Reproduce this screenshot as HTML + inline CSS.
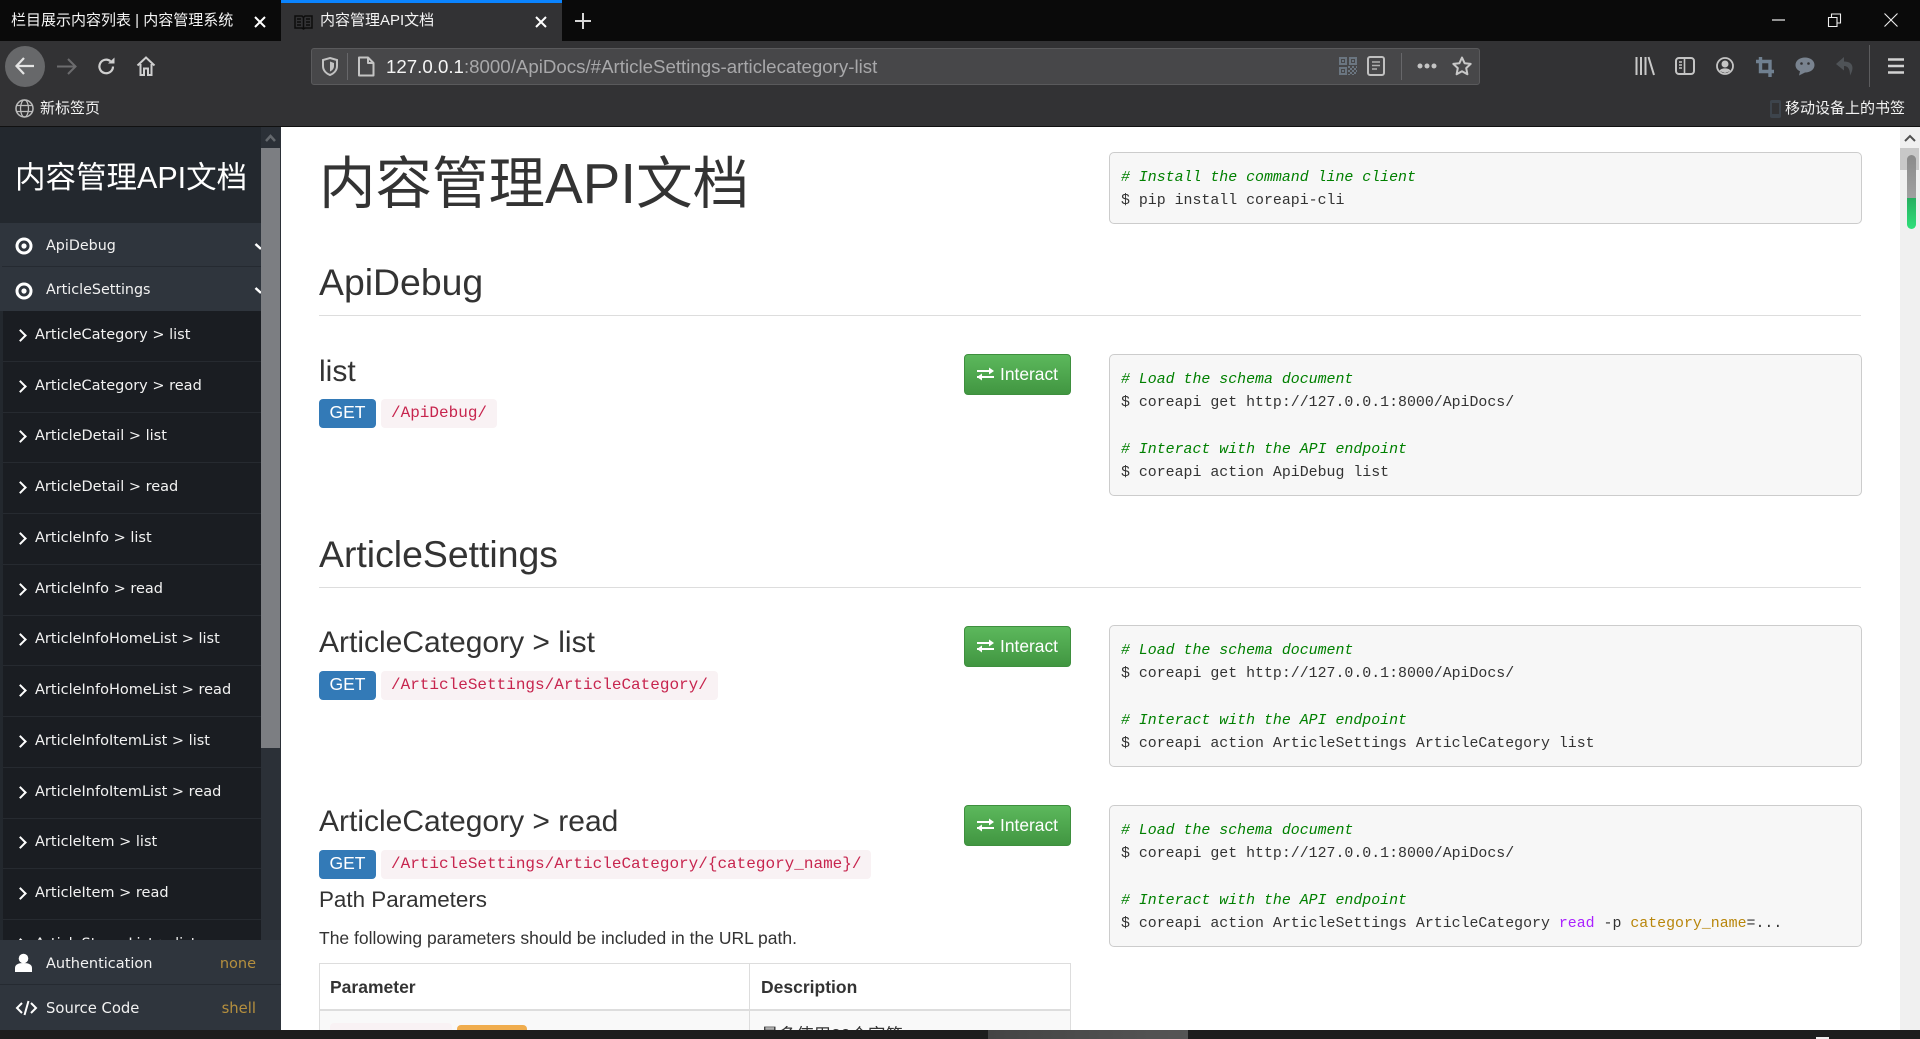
<!DOCTYPE html>
<html><head><meta charset="utf-8"><title>内容管理API文档</title>
<style>
*{box-sizing:border-box}
html,body{margin:0;padding:0;width:1920px;height:1039px;overflow:hidden;background:#323234;font-family:"Liberation Sans","Noto Sans CJK SC",sans-serif}
.a{position:absolute}
.t{position:absolute;white-space:nowrap}
svg{position:absolute;overflow:visible}
.ui{font-size:15px;color:#f4f4f4;line-height:20px}
#side{left:0;top:127px;width:281px;height:903px;background:#23282e;overflow:hidden;font-family:"DejaVu Sans","Noto Sans CJK SC",sans-serif;color:#f2f2f2}
.m{left:0;width:261px;background:#2f353d;height:44px;font-size:14.300px;padding-left:46px}
.sub{left:3px;top:184px;width:258px;height:629px;overflow:hidden;background:#1a1d22}
.s{position:absolute;left:0;width:258px;height:51px;border-bottom:1px solid #262a30;font-size:14.500px;line-height:48px;padding-left:32px;white-space:nowrap;color:#f2f2f2}
.s:before{content:"";position:absolute;left:13px;top:20px;width:7px;height:7px;border-top:2.500px solid #fff;border-right:2.500px solid #fff;transform:rotate(45deg)}
#main{left:281px;top:127px;width:1639px;height:903px;background:#fff;overflow:hidden;color:#333}
.h{position:absolute;left:38px;white-space:nowrap;color:#333;line-height:1}
.hr{position:absolute;left:38px;width:1542px;height:1px;background:#ddd}
.btn{position:absolute;left:683px;width:107px;height:41px;border:1px solid #3e8f3e;border-radius:4px;background:linear-gradient(#5cb85c,#419641);color:#fff;font-size:17.400px;line-height:38px;padding-left:35px}
.get{position:absolute;left:38px;width:57px;height:29px;border-radius:4px;background:#337ab7;color:#fff;font-size:17.500px;line-height:27px;text-align:center}
.code{position:absolute;left:100px;height:29px;border-radius:4px;background:#f9f2f4;color:#c7254e;font-family:"Liberation Mono",monospace;font-size:16px;line-height:29px;padding:0 10px;white-space:nowrap}
.pre{position:absolute;left:828px;width:753px;background:#f7f7f7;border:1px solid #ccc;border-radius:5px}
.l{position:absolute;left:11px;margin-top:1px;font-family:"Liberation Mono",monospace;font-size:14.900px;line-height:20px;white-space:pre;color:#333}
.c{color:#008000;font-style:italic}
</style></head><body>

<!-- tab strip -->
<div class="a" style="left:0;top:0;width:1920px;height:41px;background:#0a0a0a"></div>
<div class="t ui" style="left:11px;top:11px">栏目展示内容列表 | 内容管理系统</div>
<svg style="left:253px;top:15px" width="14" height="14"><path d="M2 2L12 12M12 2L2 12" stroke="#fff" stroke-width="2"/></svg>
<div class="a" style="left:281px;top:0;width:281px;height:41px;background:#323234"></div>
<div class="a" style="left:281px;top:0;width:281px;height:3px;background:#0a84ff"></div>
<svg style="left:294px;top:14px" width="19" height="16"><path d="M1 2h7l1.500 1.500L11 2h7v12h-7l-1.500 1-1.500-1H1zM9.500 3.500V14" fill="none" stroke="#0c0c0c" stroke-width="1.500"/><path d="M3 5h4M3 8h4M3 11h4M12 5h4M12 8h4M12 11h4" stroke="#0c0c0c" stroke-width="1.500"/></svg>
<div class="t ui" style="left:320px;top:11px">内容管理API文档</div>
<svg style="left:534px;top:15px" width="14" height="14"><path d="M2 2L12 12M12 2L2 12" stroke="#fff" stroke-width="2"/></svg>
<svg style="left:574px;top:12px" width="18" height="18"><path d="M9 1V17M1 9H17" stroke="#d6d6d6" stroke-width="2"/></svg>
<svg style="left:1772px;top:14px" width="14" height="12"><path d="M0 6H13" stroke="#eee" stroke-width="1.200"/></svg>
<svg style="left:1828px;top:13px" width="14" height="14"><path d="M.5 4.500h8.500v9H.500zM3.500 4.500v-3.500h9v9H9" fill="none" stroke="#eee" stroke-width="1.100"/></svg>
<svg style="left:1884px;top:13px" width="14" height="14"><path d="M.5 .5L13.500 13.500M13.500 .5L.5 13.500" stroke="#eee" stroke-width="1.100"/></svg>

<!-- nav bar -->
<div class="a" style="left:5px;top:46px;width:40px;height:41px;border-radius:50%;background:#67686a"></div>
<svg style="left:14px;top:56px" width="22" height="20"><path d="M20 10H3M10 2L2.500 10L10 18" fill="none" stroke="#e4e4e4" stroke-width="2.200"/></svg>
<svg style="left:56px;top:57px" width="22" height="19"><path d="M1 9.500H19M12 2L19.500 9.500L12 17" fill="none" stroke="#6c6c6e" stroke-width="2"/></svg>
<svg style="left:97px;top:57px" width="19" height="19"><path d="M16 9.500A6.800 6.800 0 1 1 13.500 4.200" fill="none" stroke="#cfcfcf" stroke-width="2.200"/><path d="M11 6.500H17.500V.5z" fill="#cfcfcf"/></svg>
<svg style="left:136px;top:55px" width="20" height="22"><path d="M1.500 10.500L10 2.500L18.500 10.500M4.500 9V20H8V13.500H12V20H15.500V9" fill="none" stroke="#cfcfcf" stroke-width="2"/></svg>

<div class="a" style="left:311px;top:48px;width:1169px;height:37px;background:#474749;border:1px solid #5a5a5c;border-radius:3px"></div>
<svg style="left:322px;top:57px" width="16" height="19"><path d="M8 1L15 3V9C15 14 11 17 8 18C5 17 1 14 1 9V3z" fill="none" stroke="#c2c2c2" stroke-width="2"/><path d="M8 4.500L12 6V9C12 12 10 13.500 8 14.500z" fill="#c2c2c2"/></svg>
<div class="a" style="left:347px;top:53px;width:1px;height:27px;background:#67676a"></div>
<svg style="left:357px;top:56px" width="18" height="21"><path d="M2 1.500H11L16.500 7V19.500H2zM11 1.500V7H16.500" fill="none" stroke="#c4c4c4" stroke-width="2" stroke-linejoin="round"/></svg>
<div class="t" style="left:386px;top:55px;font-size:18.700px;line-height:23px;color:#a8a8aa"><span style="color:#f5f5f5">127.0.0.1</span>:8000/ApiDocs/#ArticleSettings-articlecategory-list</div>
<svg style="left:1339px;top:57px" width="18" height="18"><path d="M0 0h8v8H0zM10 0h8v8h-8zM0 10h8v8H0z" fill="#6b7681"/><path d="M2 2h4v4H2zM12 2h4v4h-4zM2 12h4v4H2z" fill="#474749"/><path d="M3 3h2v2H3zM13 3h2v2h-2zM3 13h2v2H3z" fill="#6b7681"/><path d="M9 9h2v2H9zM13 9h2v2h-2zM17 9h1v2h-1zM11 11h2v2h-2zM15 11h2v2h-2zM9 13h2v2H9zM13 13h2v2h-2zM17 13h1v2h-1zM11 15h2v2h-2zM15 15h2v2h-2zM9 17h2v1H9zM13 17h2v1h-2z" fill="#6b7681"/></svg>
<svg style="left:1367px;top:56px" width="18" height="20"><rect x="1" y="1" width="16" height="18" rx="2" fill="none" stroke="#c0c0c0" stroke-width="2"/><path d="M5 6H13M5 9.500H13M5 13H10" stroke="#b0b0b0" stroke-width="1.500"/></svg>
<div class="a" style="left:1401px;top:53px;width:1px;height:27px;background:#67676a"></div>
<svg style="left:1417px;top:62px" width="20" height="8"><circle cx="3" cy="4" r="2.500" fill="#c4c4c4"/><circle cx="10" cy="4" r="2.500" fill="#c4c4c4"/><circle cx="17" cy="4" r="2.500" fill="#c4c4c4"/></svg>
<svg style="left:1452px;top:56px" width="20" height="20"><path d="M10 1.500L12.600 7.200L18.700 7.900L14.200 12.100L15.400 18.300L10 15.200L4.600 18.300L5.800 12.100L1.300 7.900L7.400 7.200z" fill="none" stroke="#c8c8c8" stroke-width="2" stroke-linejoin="round"/></svg>

<svg style="left:1635px;top:57px" width="20" height="18"><path d="M1.500 0V18M6 0V18M10.500 0V18M13.500 0L19 18" stroke="#c8c8c8" stroke-width="2" fill="none"/></svg>
<svg style="left:1675px;top:57px" width="20" height="18"><rect x="1" y="1" width="18" height="16" rx="3" fill="none" stroke="#c4c4c4" stroke-width="2"/><path d="M9.500 1V17M4 5H7M4 8H7M4 11H7" stroke="#c4c4c4" stroke-width="1.600"/></svg>
<svg style="left:1716px;top:57px" width="18" height="18"><circle cx="9" cy="9" r="8" fill="none" stroke="#c4c4c4" stroke-width="1.800"/><circle cx="9" cy="7" r="3.500" fill="#c4c4c4"/><path d="M3.500 14C4.500 10.500 13.500 10.500 14.500 14L9 16z" fill="#c4c4c4"/></svg>
<svg style="left:1756px;top:57px" width="18" height="20"><path d="M4.500 0V14.500H18M0 4.500H14V20" fill="none" stroke="#708090" stroke-width="3.400"/></svg>
<svg style="left:1795px;top:57px" width="20" height="19"><path d="M10 0.500C15.500 .5 19.500 3.700 19.500 8C19.500 12.300 15.500 15.500 10 15.500L4 18.500L5 14.300C2.200 13 .5 10.800 .5 8C.5 3.700 4.500 .5 10 .5z" fill="#79838f"/><circle cx="6.500" cy="6.500" r="1.300" fill="#323234"/><circle cx="13.500" cy="6.500" r="1.300" fill="#323234"/></svg>
<svg style="left:1836px;top:57px" width="18" height="19"><path d="M8 0L0 7L8 13.500V9C12 9 14 12 14 18.500C18 12 18 4.500 8 4.500z" fill="#4f5357"/></svg>
<div class="a" style="left:1869px;top:45px;width:1px;height:42px;background:#5c5c5e"></div>
<svg style="left:1888px;top:58px" width="16" height="16"><path d="M0 1.500H16M0 8H16M0 14.500H16" stroke="#d2d2d2" stroke-width="2.400"/></svg>

<!-- bookmark bar -->
<svg style="left:15px;top:99px" width="19" height="19"><circle cx="9.500" cy="9.500" r="8.500" fill="none" stroke="#bdbdbd" stroke-width="1.500"/><ellipse cx="9.500" cy="9.500" rx="4" ry="8.500" fill="none" stroke="#bdbdbd" stroke-width="1.300"/><path d="M1.500 6.500H17.500M1.500 12.500H17.500" stroke="#bdbdbd" stroke-width="1.300"/></svg>
<div class="t ui" style="left:40px;top:99px">新标签页</div>
<svg style="left:1770px;top:100px" width="11" height="18"><rect x="0" y="0" width="11" height="18" rx="2" fill="#3d444c"/><rect x="2" y="3" width="7" height="11" fill="#323234"/></svg>
<div class="t ui" style="left:1785px;top:99px">移动设备上的书签</div>
<div class="a" style="left:0;top:126px;width:1920px;height:1px;background:#111"></div>

<!-- sidebar -->
<div class="a" id="side">
  <div class="t" style="left:15px;top:33px;font-size:30.500px;line-height:36px;font-family:'Liberation Sans','Noto Sans CJK SC',sans-serif;color:#fff">内容管理API文档</div>
  <div class="a m" style="top:96px;line-height:46px">ApiDebug</div>
  <div class="a" style="left:2px;top:139px;width:259px;height:1px;background:#252a31"></div>
  <div class="a m" style="top:140px;line-height:47px">ArticleSettings</div>
  <svg style="left:15px;top:110px" width="18" height="18"><circle cx="9" cy="9" r="7" fill="none" stroke="#fff" stroke-width="3"/><circle cx="9" cy="9" r="2.600" fill="#fff"/></svg>
  <svg style="left:15px;top:155px" width="18" height="18"><circle cx="9" cy="9" r="7" fill="none" stroke="#fff" stroke-width="3"/><circle cx="9" cy="9" r="2.600" fill="#fff"/></svg>
  <svg style="left:255px;top:116px" width="6" height="8"><path d="M.5 1L6 6" stroke="#fff" stroke-width="2.500"/></svg>
  <svg style="left:255px;top:160px" width="6" height="8"><path d="M.5 1L6 6" stroke="#fff" stroke-width="2.500"/></svg>
  <div class="a sub">
    <div class="s" style="top:0">ArticleCategory &gt; list</div>
    <div class="s" style="top:51px">ArticleCategory &gt; read</div>
    <div class="s" style="top:101px">ArticleDetail &gt; list</div>
    <div class="s" style="top:152px">ArticleDetail &gt; read</div>
    <div class="s" style="top:203px">ArticleInfo &gt; list</div>
    <div class="s" style="top:254px">ArticleInfo &gt; read</div>
    <div class="s" style="top:304px">ArticleInfoHomeList &gt; list</div>
    <div class="s" style="top:355px">ArticleInfoHomeList &gt; read</div>
    <div class="s" style="top:406px">ArticleInfoItemList &gt; list</div>
    <div class="s" style="top:457px">ArticleInfoItemList &gt; read</div>
    <div class="s" style="top:507px">ArticleItem &gt; list</div>
    <div class="s" style="top:558px">ArticleItem &gt; read</div>
    <div class="s" style="top:609px">ArticleStoreyList &gt; list</div>
  </div>
  <!-- scrollbar -->
  <div class="a" style="left:261px;top:0;width:20px;height:813px;background:#2b3037"></div>
  <svg style="left:265px;top:7px" width="11" height="8"><path d="M1 7L5.500 2L10 7" fill="none" stroke="#64686d" stroke-width="2.500"/></svg>
  <div class="a" style="left:261px;top:21px;width:19px;height:600px;background:#7c7e82"></div>
  <div class="a" style="left:0;top:813px;width:281px;height:90px;background:#2f353d"></div>
  <div class="a" style="left:0;top:857px;width:281px;height:1px;background:#252a31"></div>
  <svg style="left:15px;top:826px" width="17" height="20"><circle cx="8.500" cy="5.500" r="4.800" fill="#fff"/><path d="M0 19V15C0 11.500 3.500 10 8.500 10S17 11.500 17 15V19z" fill="#fff"/></svg>
  <div class="t" style="left:46px;top:815px;font-size:14.500px;line-height:44px">Authentication</div>
  <div class="t" style="right:25px;top:815px;font-size:14.500px;line-height:44px;color:#b58f3e">none</div>
  <svg style="left:16px;top:873px" width="21" height="16"><path d="M6 3L1 8L6 13M15 3L20 8L15 13M12.500 1L8.500 15" fill="none" stroke="#fff" stroke-width="2"/></svg>
  <div class="t" style="left:46px;top:860px;font-size:14.800px;line-height:44px">Source Code</div>
  <div class="t" style="right:25px;top:860px;font-size:14.800px;line-height:44px;color:#b58f3e">shell</div>
</div>

<!-- main -->
<div class="a" id="main">
  <div class="h" style="top:23px;font-size:56.500px;line-height:68px">内容管理API文档</div>
  <div class="h" style="top:134px;font-size:37.400px;line-height:42px">ApiDebug</div>
  <div class="hr" style="top:188px"></div>
  <div class="h" style="top:228px;font-size:30px;line-height:34px">list</div>
  <div class="btn" style="top:227px">Interact<svg style="left:12px;top:12px" width="18" height="14"><path d="M0 4H13M0 10H17" stroke="#fff" stroke-width="2"/><path d="M12 .5L17 4L12 7.500zM5 6.500L0 10L5 13.500z" fill="#fff"/></svg></div>
  <div class="get" style="top:272px">GET</div><div class="code" style="top:272px">/ApiDebug/</div>

  <div class="h" style="top:406px;font-size:37.400px;line-height:42px">ArticleSettings</div>
  <div class="hr" style="top:460px"></div>
  <div class="h" style="top:499px;font-size:30px;line-height:34px">ArticleCategory &gt; list</div>
  <div class="btn" style="top:499px">Interact<svg style="left:12px;top:12px" width="18" height="14"><path d="M0 4H13M0 10H17" stroke="#fff" stroke-width="2"/><path d="M12 .5L17 4L12 7.500zM5 6.500L0 10L5 13.500z" fill="#fff"/></svg></div>
  <div class="get" style="top:544px">GET</div><div class="code" style="top:544px">/ArticleSettings/ArticleCategory/</div>

  <div class="h" style="top:678px;font-size:30px;line-height:34px">ArticleCategory &gt; read</div>
  <div class="btn" style="top:678px">Interact<svg style="left:12px;top:12px" width="18" height="14"><path d="M0 4H13M0 10H17" stroke="#fff" stroke-width="2"/><path d="M12 .5L17 4L12 7.500zM5 6.500L0 10L5 13.500z" fill="#fff"/></svg></div>
  <div class="get" style="top:723px">GET</div><div class="code" style="top:723px">/ArticleSettings/ArticleCategory/{category_name}/</div>
  <div class="h" style="top:760px;font-size:22.400px;line-height:26px">Path Parameters</div>
  <div class="h" style="top:801px;font-size:17.500px;line-height:20px">The following parameters should be included in the URL path.</div>

  <div class="a" style="left:38px;top:836px;width:752px;height:80px;border:1px solid #ddd;background:#fff"></div>
  <div class="a" style="left:39px;top:883px;width:750px;height:30px;background:#f9f9f9"></div>
  <div class="a" style="left:38px;top:882px;width:752px;height:2px;background:#ddd"></div>
  <div class="a" style="left:468px;top:836px;width:1px;height:80px;background:#ddd"></div>
  <div class="t" style="left:49px;top:850px;font-size:17.500px;line-height:20px;font-weight:bold">Parameter</div>
  <div class="t" style="left:480px;top:850px;font-size:17.500px;line-height:20px;font-weight:bold">Description</div>
  <div class="a" style="left:49px;top:896px;width:122px;height:20px;background:#f9f2f4;border-radius:4px"></div>
  <div class="a" style="left:176px;top:898px;width:70px;height:20px;background:#f0ad4e;border-radius:4px"></div>
  <div class="t" style="left:480px;top:896px;font-size:17.500px;line-height:24px">最多使用20个字符</div>

  <!-- code blocks -->
  <div class="pre" style="top:25px;height:72px">
    <div class="l" style="top:14px"><span class="c"># Install the command line client</span></div>
    <div class="l" style="top:37px">$ pip install coreapi-cli</div>
  </div>
  <div class="pre" style="top:227px;height:142px">
    <div class="l" style="top:14px"><span class="c"># Load the schema document</span></div>
    <div class="l" style="top:37px">$ coreapi get http://127.0.0.1:8000/ApiDocs/</div>
    <div class="l" style="top:84px"><span class="c"># Interact with the API endpoint</span></div>
    <div class="l" style="top:107px">$ coreapi action ApiDebug list</div>
  </div>
  <div class="pre" style="top:498px;height:142px">
    <div class="l" style="top:14px"><span class="c"># Load the schema document</span></div>
    <div class="l" style="top:37px">$ coreapi get http://127.0.0.1:8000/ApiDocs/</div>
    <div class="l" style="top:84px"><span class="c"># Interact with the API endpoint</span></div>
    <div class="l" style="top:107px">$ coreapi action ArticleSettings ArticleCategory list</div>
  </div>
  <div class="pre" style="top:678px;height:142px">
    <div class="l" style="top:14px"><span class="c"># Load the schema document</span></div>
    <div class="l" style="top:37px">$ coreapi get http://127.0.0.1:8000/ApiDocs/</div>
    <div class="l" style="top:84px"><span class="c"># Interact with the API endpoint</span></div>
    <div class="l" style="top:107px">$ coreapi action ArticleSettings ArticleCategory <span style="color:#aa22ff">read</span> -p <span style="color:#b8860b">category_name</span>=...</div>
  </div>

  <!-- right scrollbar -->
  <div class="a" style="left:1619px;top:0;width:20px;height:903px;background:#f0f0f0"></div>
  <svg style="left:1623px;top:7px" width="12" height="8"><path d="M1 7L6 2L11 7" fill="none" stroke="#505050" stroke-width="2"/></svg>
  <div class="a" style="left:1619px;top:21px;width:19px;height:22px;background:#c8c8c8"></div>
  <div class="a" style="left:1626px;top:28px;width:9px;height:74px;border-radius:5px;background:linear-gradient(#8a8a8a 0,#a0a0a0 58%,#27ae60 58%,#2fe07a 100%)"></div>
</div>

<!-- bottom strip -->
<div class="a" style="left:0;top:1030px;width:1920px;height:9px;background:#1d1d1d"></div>
<div class="a" style="left:988px;top:1030px;width:200px;height:9px;background:linear-gradient(90deg,#444,#555)"></div>
<div class="a" style="left:1816px;top:1037px;width:13px;height:2px;background:#eee"></div>
</body></html>
